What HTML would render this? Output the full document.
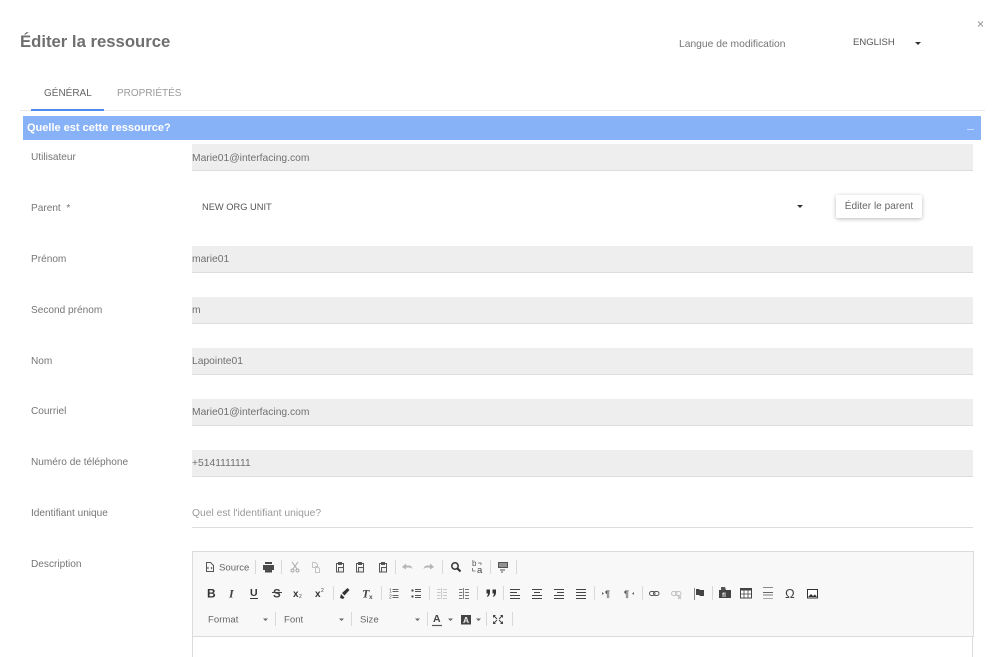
<!DOCTYPE html>
<html lang="fr"><head><meta charset="utf-8"><title>Éditer la ressource</title>
<style>
html,body{margin:0;padding:0;background:#fff;}
body{width:1000px;height:657px;overflow:hidden;position:relative;font-family:"Liberation Sans",sans-serif;color:#757575;}
#w{position:absolute;left:0;top:0;width:1000px;height:657px;background:#fff;overflow:hidden;filter:blur(.35px);}
.t{position:absolute;white-space:nowrap;font-size:10.1px;line-height:14px;}
.l{left:31px;color:#757575;}
.f{position:absolute;left:192px;width:781px;height:26px;background:#eee;border-bottom:1px solid #ddd;}
.v{position:absolute;left:192px;white-space:nowrap;font-size:10.3px;line-height:14px;color:#707070;}
.caret{position:absolute;width:0;height:0;border-left:3px solid transparent;border-right:3px solid transparent;border-top:3px solid #333;}
svg{position:absolute;left:0;top:0;}
</style></head><body><div id="w">
<div class="t" style="left:20px;top:31px;font-size:16.7px;line-height:22px;font-weight:bold;color:#6f6f6f;">Éditer la ressource</div>
<div class="t" style="left:679px;top:38px;font-size:10.3px;color:#757575;">Langue de modification</div>
<div class="t" style="left:853px;top:36px;font-size:9.5px;color:#555;">ENGLISH</div>
<div class="caret" style="left:915px;top:42px;"></div>
<svg width="1000" height="40"><path d="M978 21.5l5 5M983 21.500l-5 5" stroke="#9a9a9a" stroke-width="1" fill="none"/></svg>

<div class="t" style="left:44px;top:87px;font-size:10px;color:#666;">GÉNÉRAL</div>
<div class="t" style="left:117px;top:87px;font-size:10px;color:#999;">PROPRIÉTÉS</div>
<div style="position:absolute;left:20px;top:110px;width:965px;height:1px;background:#e8e8e8;"></div>
<div style="position:absolute;left:31px;top:109px;width:73px;height:2px;background:#4c8bf0;"></div>

<div style="position:absolute;left:23px;top:116px;width:958px;height:24px;background:#88b2f7;"></div>
<div class="t" style="left:27px;top:121px;font-size:11px;font-weight:bold;color:#fff;">Quelle est cette ressource?</div>
<div style="position:absolute;left:967px;top:129px;width:7px;height:1px;background:#c8dafb;"></div>

<div class="t l" style="top:151px;">Utilisateur</div>
<div class="f" style="top:144px;"></div><div class="v" style="top:152px;">Marie01@interfacing.com</div>

<div class="t l" style="top:202px;">Parent&nbsp; *</div>
<div class="t" style="left:202px;top:200px;font-size:9.3px;color:#555;">NEW ORG UNIT</div>
<div class="caret" style="left:797px;top:205px;"></div>
<div class="t" style="left:836px;top:195px;width:86px;height:23px;line-height:23px;text-align:center;background:#fff;border-radius:2px;box-shadow:0 1px 4px rgba(0,0,0,.28);color:#666;">Éditer le parent</div>

<div class="t l" style="top:253px;">Prénom</div>
<div class="f" style="top:246px;"></div><div class="v" style="top:253px;">marie01</div>

<div class="t l" style="top:304px;">Second prénom</div>
<div class="f" style="top:297px;"></div><div class="v" style="top:304px;">m</div>

<div class="t l" style="top:355px;">Nom</div>
<div class="f" style="top:348px;"></div><div class="v" style="top:355px;">Lapointe01</div>

<div class="t l" style="top:405px;">Courriel</div>
<div class="f" style="top:399px;"></div><div class="v" style="top:406px;">Marie01@interfacing.com</div>

<div class="t l" style="top:456px;">Numéro de téléphone</div>
<div class="f" style="top:450px;"></div><div class="v" style="top:457px;">+5141111111</div>

<div class="t l" style="top:507px;">Identifiant unique</div>
<div class="v" style="top:507px;color:#9a9a9a;">Quel est l'identifiant unique?</div>
<div style="position:absolute;left:192px;top:527px;width:781px;height:1px;background:#ddd;"></div>

<div class="t l" style="top:558px;">Description</div>

<div style="position:absolute;left:192px;top:551px;width:780px;height:84px;background:#f8f8f8;border:1px solid #dcdcdc;"></div>
<div style="position:absolute;left:192px;top:636px;width:1px;height:21px;background:#dcdcdc;"></div>
<div style="position:absolute;left:972px;top:636px;width:1px;height:21px;background:#dcdcdc;"></div>

<svg width="1000" height="657" font-family="'Liberation Sans',sans-serif">
<g stroke="#d8d8d8" stroke-width="1">
<path d="M255.5 560v14M281.5 560v14M395.5 560v14M442.5 560v14M490.5 560v14M516.5 560v14"/>
<path d="M333.5 586v14M381.5 586v14M429.5 586v14M477.5 586v14M503.5 586v14M594.5 586v14M642.5 586v14M712.5 586v14"/>
<path d="M275.5 612v14M351.5 612v14M427.5 612v14M486.5 612v14M512.5 612v14"/>
</g>
<!-- row 1 -->
<path d="M206.5 562.5h4l3 3v6h-7z" fill="none" stroke="#555"/><path d="M208.500 567l-1 1 1 1M211 567l1 1-1 1" fill="none" stroke="#444" stroke-width=".8"/>
<text x="219" y="570.500" font-size="9.600" fill="#666">Source</text>
<path d="M265 562h7v2h-7zM263 565h11v5h-2v2.500h-7V570h-2z" fill="#4a4a4a"/>
<g stroke="#aaa" fill="none"><path d="M292 562l5 7M298 562l-5 7"/><circle cx="292.500" cy="570.500" r="1.500"/><circle cx="297.500" cy="570.500" r="1.500"/></g>
<path d="M312.500 562.500h3l2 2v3h-5zM315.500 566.500h2l2 2v4h-4z" fill="none" stroke="#c4c4c4"/>
<g fill="none" stroke="#555"><path d="M336.500 563.500h7v8.500h-7z"/><path d="M338.500 567.500h5v4.500h-5z" fill="#eee"/><path d="M338.500 562.500h3v2h-3z" fill="#555"/>
<path d="M356.500 563.500h7v8.500h-7z"/><path d="M358.500 567.500h5v4.500h-5z" fill="#eee"/><path d="M358.500 562.500h3v2h-3z" fill="#555"/>
<path d="M379.500 563.500h7v8.500h-7z"/><path d="M381.500 567.500h5v4.500h-5z" fill="#eee"/><path d="M381.500 562.500h3v2h-3z" fill="#555"/></g>
<path d="M402 567l4-3.500v2h3c2 0 3 1.500 3.500 3.500-1-1-2-1.500-3.500-1.500h-3v2z" fill="#b5b5b5"/>
<path d="M434 567l-4-3.500v2h-3c-2 0-3 1.500-3.500 3.500 1-1 2-1.500 3.500-1.500h3v2z" fill="#b5b5b5"/>
<circle cx="455" cy="566" r="3.200" fill="none" stroke="#333" stroke-width="1.500"/><path d="M457.500 568.500l3 3" stroke="#333" stroke-width="2"/>
<text x="472" y="566" font-size="8" fill="#555">b</text><text x="477" y="573" font-size="9.500" fill="#444">a</text><path d="M472.500 568v3h3M478 563h3v2" fill="none" stroke="#666" stroke-width=".8"/>
<path d="M498 562h10v6h-10zM500 569.500h5v1h-5zM501 571.500h2v1h-2z" fill="#555"/><path d="M499 564h8M499 566h8" stroke="#f8f8f8" stroke-width=".7"/>
<!-- row 2 -->
<text x="207" y="597.500" font-size="12" font-weight="bold" fill="#333">B</text>
<text x="229" y="597.500" font-size="12" font-style="italic" font-weight="bold" font-family="'Liberation Serif',serif" fill="#444">I</text>
<text x="250" y="596" font-size="10.500" font-weight="bold" fill="#333">U</text><path d="M250 598.500h8" stroke="#333"/>
<text x="273" y="597.500" font-size="11.500" font-weight="bold" fill="#444">S</text><path d="M272 592.500h10" stroke="#444"/>
<text x="293" y="597" font-size="10" font-weight="bold" fill="#333">x</text><text x="299" y="598" font-size="5" fill="#444">2</text>
<text x="315" y="597" font-size="10" font-weight="bold" fill="#333">x</text><text x="321" y="592" font-size="5" fill="#444">2</text>
<path d="M340 598l1-4 3.500 3.500-1.500 1.500zM342 593l5.500-5 2 2-5 5.500z" fill="#333"/>
<text x="362" y="597.500" font-size="12" font-style="italic" font-weight="bold" font-family="'Liberation Serif',serif" fill="#444">T</text><text x="369" y="599" font-size="6.500" font-weight="bold" fill="#555">x</text>
<!-- lists -->
<text x="389" y="592.500" font-size="5" fill="#555">1</text><text x="389" y="598.500" font-size="5" fill="#555">2</text>
<path d="M392.500 589.500h6M392.500 591.500h6M392.500 595.500h6M392.500 597.500h6" stroke="#666" stroke-width=".9"/>
<path d="M411.500 590.500h2M411.500 596.500h2" stroke="#444" stroke-width="2"/>
<path d="M415 589.500h6M415 591.500h6M415 595.500h6M415 597.500h6" stroke="#555" stroke-width=".9"/>
<path d="M437 589.500h3.500M437 592.500h3.500M437 595.500h3.500M437 598.500h3.500M443 589.500h4M443 592.500h4M443 595.500h4M443 598.500h4M441.500 588v11" stroke="#c8c8c8" stroke-width=".9"/>
<path d="M459 589.500h3.500M459 592.500h3.500M459 595.500h3.500M459 598.500h3.500M465 589.500h4M465 592.500h4M465 595.500h4M465 598.500h4M463.500 588v11" stroke="#777" stroke-width=".9"/>
<!-- quote -->
<path d="M486.500 589.500h3.500v3c0 2-1 3.500-2.500 4.500l-.5-1c.7-.7 1-1.500 1-2.500h-1.500zM492.500 589.500h3.500v3c0 2-1 3.500-2.500 4.500l-.5-1c.7-.7 1-1.500 1-2.500h-1.500z" fill="#333"/>
<g stroke="#444"><path d="M510 589.500h10M510 592.500h7M510 595.500h10M510 598.500h10"/>
<path d="M532 589.500h10M534 592.500h6M532 595.500h10M532 598.500h10"/>
<path d="M554 589.500h10M557 592.500h7M554 595.500h10M554 598.500h10"/>
<path d="M576 589.500h10M576 592.500h10M576 595.500h10M576 598.500h10"/></g>
<text x="605" y="597" font-size="9" font-weight="bold" fill="#555">¶</text><path d="M602 592v3l2-1.500z" fill="#666"/>
<text x="624" y="597" font-size="9" font-weight="bold" fill="#555">¶</text><path d="M634 592v3l-2-1.500z" fill="#666"/>
<rect x="649.500" y="591.500" width="5.500" height="4" rx="2" fill="none" stroke="#555"/><rect x="653.500" y="591.500" width="5.500" height="4" rx="2" fill="none" stroke="#555"/>
<rect x="671.500" y="591.500" width="5.500" height="4" rx="2" fill="none" stroke="#c0c0c0"/><rect x="675.500" y="591.500" width="5.500" height="4" rx="2" fill="none" stroke="#c0c0c0"/><path d="M678 596l3 3M681 596l-3 3" stroke="#bbb"/>
<path d="M694.500 588v12" stroke="#888"/><path d="M696 589h3l1 1h4v6h-4l-1-1h-3z" fill="#444"/>
<path d="M719 590h12v8h-12z" fill="#444"/><path d="M721 587h4l1 3h-5z" fill="#555"/><text x="722" y="597" font-size="6.500" font-weight="bold" fill="#eee">fl</text>
<rect x="740.500" y="588.500" width="11" height="9.500" fill="#fff" stroke="#444"/><path d="M740 589.500h12" stroke="#444" stroke-width="2"/><path d="M744 590v8M748 590v8M741 594h11" stroke="#444" stroke-width=".8"/>
<path d="M763 587.500h10" stroke="#888"/><path d="M763 592.500h10" stroke="#666"/><rect x="763" y="594" width="10" height="2" fill="#bbb"/><path d="M763 598.500h10" stroke="#aaa"/>
<text x="785" y="598" font-size="13" fill="#444">Ω</text>
<rect x="807.500" y="589.500" width="10" height="8.500" fill="#fff" stroke="#333"/><path d="M808 597l3-3 2 2 2-1.500 2 2.500z" fill="#333"/>
<!-- row 3 -->
<text x="208" y="622.500" font-size="9.600" fill="#666">Format</text>
<text x="284" y="622.500" font-size="9.600" fill="#666">Font</text>
<text x="360" y="622.500" font-size="9.600" fill="#666">Size</text>
<path d="M263 618.500h5l-2.500 2.500zM339 618.500h5l-2.500 2.500zM415 618.500h5l-2.500 2.500zM448 618.500h5l-2.500 2.500zM476 618.500h5l-2.500 2.500z" fill="#666"/>
<text x="433" y="622" font-size="10.500" font-weight="bold" fill="#444">A</text><path d="M432 625.500h10" stroke="#555" stroke-width="1.200"/>
<rect x="461" y="615" width="10" height="9.500" fill="#444"/><text x="463" y="623" font-size="8.500" font-weight="bold" fill="#eee">A</text>
<path d="M493 615h3l-3 3zM503 615h-3l3 3zM493 624h3l-3-3zM503 624h-3l3-3z" fill="#444"/><path d="M494 616l3 3M502 616l-3 3M494 623l3-3M502 623l-3-3" stroke="#444"/>
</svg>
</div></body></html>
